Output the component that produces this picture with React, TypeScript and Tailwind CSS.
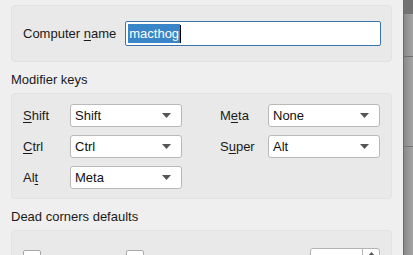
import React from "react";

const font = { fontFamily: '"Liberation Sans", Arial, sans-serif' };

const Mn = ({ pre = "", u, post = "" }: { pre?: string; u: string; post?: string }) => (
  <span>
    {pre}
    <span className="underline underline-offset-2">{u}</span>
    {post}
  </span>
);

const Combo = ({ value }: { value: string }) => (
  <div className="h-[23px] w-[112px] flex items-center justify-between bg-white border border-[#b9b9b9] rounded-[3px] pl-[4px] pr-[10px] text-[13px] text-[#111]">
    <span>{value}</span>
    <svg width="9" height="5" viewBox="0 0 9 5">
      <path d="M0 0 L9 0 L4.5 5 Z" fill="#555" />
    </svg>
  </div>
);

const Box = ({ className, children }: { className: string; children?: React.ReactNode }) => (
  <div className={"shrink-0 rounded-[4px] border border-[#e2e2e2] bg-[#e9e9e9] " + className}>{children}</div>
);

export default function App() {
  return (
    <div className="w-[413px] h-[255px] flex overflow-hidden text-[13px] text-[#1a1a1a]" style={font}>
      <div className="w-[403px] h-full bg-[#efefef] flex flex-col pl-[11px] pr-[11px] pt-[5px]">
        {/* Computer name */}
        <Box className="h-[57px] flex items-center pl-[11px] gap-[9px]">
          <Mn pre="Computer " u="n" post="ame" />
          <div className="w-[256px] h-[25px] bg-white border border-[#3d74ad] rounded-[2px] flex items-center pl-[2px]">
            <span className="bg-[#3a84c8] text-white leading-[19px] px-[1px]">macthog</span>
            <span className="w-px h-[18px] bg-black" />
          </div>
        </Box>

        {/* Modifier keys */}
        <div className="shrink-0 mt-[10px] h-[16px] leading-[16px]">Modifier keys</div>
        <Box className="mt-[5px] h-[106px] pl-[11px] pt-[10px]">
          <div className="grid grid-cols-[47px_112px_38px_48px_112px] gap-y-[8px] items-center">
            <Mn u="S" post="hift" />
            <Combo value="Shift" />
            <div />
            <Mn pre="M" u="e" post="ta" />
            <Combo value="None" />

            <Mn u="C" post="trl" />
            <Combo value="Ctrl" />
            <div />
            <Mn pre="S" u="u" post="per" />
            <Combo value="Alt" />

            <Mn pre="Al" u="t" />
            <Combo value="Meta" />
          </div>
        </Box>

        {/* Dead corners */}
        <div className="shrink-0 mt-[10px] h-[16px] leading-[16px]">Dead corners defaults</div>
        <Box className="mt-[5px] h-[60px] pl-[11px] pt-[19px]">
          <div className="flex items-start">
            <div className="w-[18px] h-[18px] bg-white border border-[#a9a9a9] rounded-[2px]" />
            <div className="w-[85px]" />
            <div className="w-[18px] h-[18px] bg-white border border-[#a9a9a9] rounded-[2px]" />
            <span className="ml-[6px] mt-[1px]">Top-left</span>
            <span className="ml-[24px] mt-[1px]">Screen edge</span>
            <div className="ml-[20px] -mt-[2px] w-[70px] h-[24px] bg-white border border-[#b3b3b3] rounded-[3px] flex justify-end">
              <div className="w-[17px] border-l border-[#b3b3b3] flex justify-center pt-[3px]">
                <svg width="7" height="4" viewBox="0 0 7 4">
                  <path d="M0 4 L7 4 L3.5 0 Z" fill="#555" />
                </svg>
              </div>
            </div>
          </div>
        </Box>
      </div>

      {/* background window strip */}
      <div className="w-[10px] h-full flex flex-col border-l border-[#6a6a6a] bg-gradient-to-r from-[#8a8a8a] to-[#a5a5a5]">
        <div className="h-[14px] bg-[#727272]" />
        <div className="h-[43px] border-b border-[#6e6e6e]" />
        <div className="h-[90px] border-b border-[#747474]" />
      </div>
    </div>
  );
}
